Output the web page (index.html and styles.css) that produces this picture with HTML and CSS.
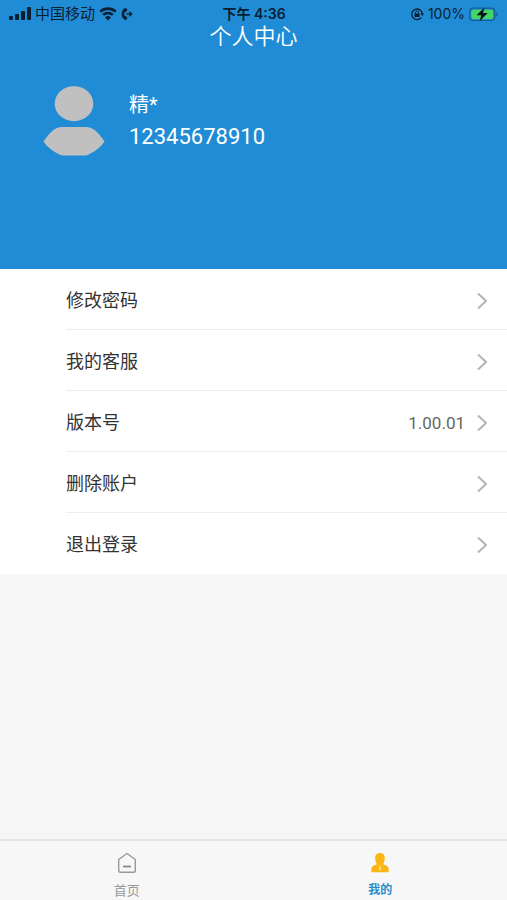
FILE: index.html
```html
<!DOCTYPE html>
<html lang="zh-CN">
<head>
<meta charset="utf-8">
<meta name="viewport" content="width=device-width, initial-scale=1">
<title>个人中心</title>
<link rel="stylesheet" href="styles.css">
</head>
<body>
<header class="hero">
  <div class="status">
    <div class="status-side">
      <svg class="signal" width="22" height="14" viewBox="0 0 22 14" aria-hidden="true"><rect x="0" y="9" width="4" height="4" rx="1"/><rect x="6" y="7" width="4" height="6" rx="1"/><rect x="12" y="4" width="4" height="9" rx="1"/><rect x="18" y="0" width="4" height="13" rx="1"/></svg>
      <span class="carrier">中国移动</span>
      <svg class="wifi" width="18" height="14" viewBox="0 0 18 14" aria-hidden="true"><path d="M1.2 4.600a11.600 11.600 0 0 1 15.600 0M4.200 7.900a7.200 7.200 0 0 1 9.600 0" fill="none" stroke="currentColor" stroke-width="2.600"/><path d="M9 13.400 6 10.500a4.400 4.400 0 0 1 6 0z"/></svg>
      <svg class="call" width="12" height="14" viewBox="0 0 12 14" aria-hidden="true"><path d="M4.600.7C1.800 1.500.7 4.300.7 7s1.100 5.500 3.900 6.300l2-2.300-2-2.200-1 .3a6 6 0 0 1 0-4.200l1 .3 2-2.200z"/><path d="M5.500 7h5M8.500 4.800 10.800 7 8.500 9.200" fill="none" stroke="currentColor" stroke-width="1.300"/></svg>
    </div>
    <time class="clock">下午 4:36</time>
    <div class="status-side status-right">
      <svg class="lock" width="14" height="14" viewBox="0 0 14 14" aria-hidden="true"><path d="M11.200 10.600A5.300 5.300 0 1 1 12.300 7" fill="none" stroke="currentColor" stroke-width="1.300"/><path d="M10.300 6.500H14L12.200 9z"/><rect x="4.500" y="6.500" width="5" height="3.500" rx=".5"/><path d="M5.500 7V5.500a1.500 1.500 0 0 1 3 0V7" fill="none" stroke="currentColor"/></svg>
      <span class="percent">100%</span>
      <svg class="battery" width="30" height="15" viewBox="0 0 30 15" aria-hidden="true"><rect x=".7" y="1.200" width="25" height="12.300" rx="3.500" fill="none" stroke="#155b8e" stroke-width="1.200"/><rect x="2.300" y="2.800" width="21.800" height="9.100" rx="2" fill="#43d565"/><path d="M27.300 5.300c2 .7 2 3.700 0 4.400z" fill="#155b8e"/><path d="M15.500.5 7.500 8.300h4.700l-1.500 6 8-8.200H14z" fill="#06131c"/></svg>
    </div>
  </div>
  <h1 class="title">个人中心</h1>
  <section class="profile">
    <svg class="avatar" width="62" height="70" viewBox="0 0 62 70" role="img" aria-label="头像"><ellipse cx="31" cy="17.700" rx="19.300" ry="17.500"/><path d="M.5 55.500C6 47 12 41 19 41h24c7 0 13 6 18.500 14.500C58 61 50 67 43 69.500H19C12 67 4 61 .5 55.500z"/></svg>
    <div class="identity">
      <p class="name">精*</p>
      <p class="phone">12345678910</p>
    </div>
  </section>
</header>
<main class="menu">
  <a class="row" href="#password"><span>修改密码</span><svg class="chevron" width="10" height="18" viewBox="0 0 10 18" aria-hidden="true"><path d="m1 1.500 8 7.500-8 7.500"/></svg></a>
  <a class="row" href="#service"><span>我的客服</span><svg class="chevron" width="10" height="18" viewBox="0 0 10 18" aria-hidden="true"><path d="m1 1.500 8 7.500-8 7.500"/></svg></a>
  <a class="row" href="#version"><span>版本号</span><span class="value">1.00.01</span><svg class="chevron" width="10" height="18" viewBox="0 0 10 18" aria-hidden="true"><path d="m1 1.500 8 7.500-8 7.500"/></svg></a>
  <a class="row" href="#delete"><span>删除账户</span><svg class="chevron" width="10" height="18" viewBox="0 0 10 18" aria-hidden="true"><path d="m1 1.500 8 7.500-8 7.500"/></svg></a>
  <a class="row" href="#logout"><span>退出登录</span><svg class="chevron" width="10" height="18" viewBox="0 0 10 18" aria-hidden="true"><path d="m1 1.500 8 7.500-8 7.500"/></svg></a>
</main>
<nav class="tabs">
  <a class="tab" href="#home"><svg width="20" height="22" viewBox="0 0 20 22" aria-hidden="true"><path d="M1.700 7.500 10 1.500l8.300 6v11.300a1.500 1.500 0 0 1-1.500 1.500H3.200a1.500 1.500 0 0 1-1.500-1.500z" fill="none" stroke="#999" stroke-width="1.400" stroke-linejoin="round"/><path d="M6 14.500h8" stroke="#888" stroke-width="1.800"/></svg><span>首页</span></a>
  <a class="tab active" href="#mine" aria-current="page"><svg width="20" height="22" viewBox="0 0 20 22" aria-hidden="true"><path d="M10 1C6.800 1 5 3.200 5.200 6.200c.1 2 .6 3.900 1.300 5v1.300c-3.300.8-5.200 2-5.200 4.700v2.300c0 .5.300.8.800.8h15.800c.5 0 .8-.3.800-.8v-2.300c0-2.700-1.900-3.900-5.200-4.700v-1.300c.7-1.100 1.200-3 1.300-5C15 3.200 13.200 1 10 1z" fill="#fbb615"/><path d="m9.200 13.500h1.600l-.4 1.300.7 2.500-1.100 1.200-1.100-1.200.7-2.500z" fill="#fde4a0"/></svg><span>我的</span></a>
</nav>
</body>
</html>
```
FILE: styles.css
```css
* {
  box-sizing: border-box;
}

body {
  margin: 0;
  min-height: 100vh;
  display: flex;
  flex-direction: column;
  background: #f6f6f6;
  color: #333;
  font-family: Roboto, "Noto Sans CJK SC", sans-serif;
}

h1,
p {
  margin: 0;
}

a {
  color: inherit;
  text-decoration: none;
}

svg {
  display: block;
  flex: none;
}

.hero {
  padding-bottom: 113px;
  background: #218cd6;
  color: #fff;
}

.status {
  display: grid;
  grid-template-columns: 1fr auto 1fr;
  align-items: center;
  height: 24px;
  padding: 4px 8px 0 9px;
  color: #092033;
  fill: currentColor;
  font-family: Inter, "Noto Sans CJK SC", sans-serif;
  font-size: 14px;
  line-height: 20px;
}

.status-side {
  display: flex;
  align-items: center;
  gap: 4px;
}

.status-right {
  justify-content: flex-end;
}

.carrier {
  font-size: 15px;
}

.clock {
  font-weight: 600;
}

.title {
  font-size: 22px;
  font-weight: 350;
  line-height: 26px;
  text-align: center;
}

.profile {
  display: flex;
  align-items: center;
  gap: 24px;
  padding: 36px 43px 0;
}

.avatar {
  fill: #c0c0c0;
}

.name {
  font-size: 20px;
  line-height: 32px;
}

.phone {
  font-size: 22px;
  line-height: 32px;
}

.menu {
  padding-left: 66px;
  background: #fff;
}

.row {
  display: flex;
  align-items: center;
  height: 61px;
  padding: 3px 20px 0 0;
  border-bottom: 1px solid #eee;
  font-size: 18px;
  line-height: 28px;
}

.row:last-child {
  border-bottom-color: transparent;
}

.chevron {
  margin-left: auto;
  fill: none;
  stroke: #b5b5b5;
  stroke-width: 2;
}

.value {
  margin-left: auto;
  color: #666;
  font-size: 17px;
}

.value + .chevron {
  margin-left: 12px;
}

.tabs {
  display: flex;
  margin-top: auto;
  border-top: 2px solid #e5e5e5;
  background: #f7f7f7;
}

.tab {
  display: flex;
  flex: 1;
  flex-direction: column;
  align-items: center;
  gap: 7px;
  padding-top: 11px;
  color: #999;
  font-size: 13px;
  line-height: 19px;
}

.active {
  color: #2b8dcb;
  font-size: 12px;
  font-weight: 700;
}
```
